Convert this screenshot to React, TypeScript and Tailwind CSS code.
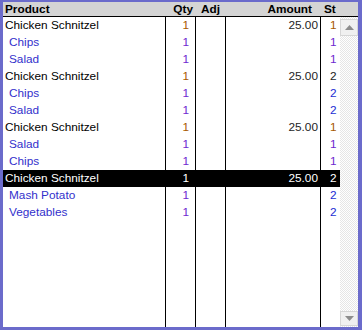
const rows = [
  { product: "Chicken Schnitzel", main: true, amount: "25.00", st: "1" },
  { product: "Chips", st: "1" },
  { product: "Salad", st: "1" },
  { product: "Chicken Schnitzel", main: true, amount: "25.00", st: "2" },
  { product: "Chips", st: "2" },
  { product: "Salad", st: "2" },
  { product: "Chicken Schnitzel", main: true, amount: "25.00", st: "1" },
  { product: "Salad", st: "1" },
  { product: "Chips", st: "1" },
  { product: "Chicken Schnitzel", main: true, amount: "25.00", st: "2", selected: true },
  { product: "Mash Potato", st: "2" },
  { product: "Vegetables", st: "2" },
];

function stColor(main?: boolean, st?: string) {
  if (main) return st === "1" ? "text-[#a85800]" : "text-[#1e1e1e]";
  return st === "1" ? "text-[#6e28d0]" : "text-[#1e2ed4]";
}

export default function App() {
  return (
    <div
      className="w-[362px] h-[330px] flex flex-col border-l-[3px] border-t-[2px] border-r-[4px] border-b-[3px] border-[#6b6bcb] bg-white text-[11.8px]"
      style={{ fontFamily: "'Liberation Sans', Arial, sans-serif" }}
    >
      {/* header */}
      <div className="flex h-[15px] shrink-0 bg-[#d4d4d4] border-b border-black font-bold text-black leading-[14px]">
        <div className="w-[163px] pl-[2px]">Product</div>
        <div className="w-[30px] text-right pr-[3px]">Qty</div>
        <div className="w-[30px] pl-[5px]">Adj</div>
        <div className="w-[95px] text-right pr-[9px]">Amount</div>
        <div className="w-[19px] pl-[3px]">St</div>
      </div>

      <div className="flex flex-1 min-h-0">
        {/* grid body */}
        <div className="w-[337px] flex flex-col">
          {rows.map((r, i) => (
            <div
              key={i}
              className={`flex h-[17px] leading-[17px] ${r.selected ? "bg-black text-white" : ""}`}
            >
              <div
                className={`w-[163px] border-r border-black truncate ${r.main ? "pl-[2px]" : "pl-[6px]"} ${
                  r.selected ? "" : r.main ? "text-black" : "text-[#3230cc]"
                }`}
              >
                {r.product}
              </div>
              <div
                className={`w-[30px] border-r border-black text-right pr-[6px] ${
                  r.selected ? "" : r.main ? "text-[#a85800]" : "text-[#6e28d0]"
                }`}
              >
                1
              </div>
              <div className="w-[30px] border-r border-black" />
              <div className={`w-[95px] border-r border-black text-right pr-[2px] ${r.selected ? "" : "text-[#1e1e1e]"}`}>
                {r.amount}
              </div>
              <div className={`w-[19px] pl-[9px] ${r.selected ? "" : stColor(r.main, r.st)}`}>{r.st}</div>
            </div>
          ))}
          <div className="flex flex-1">
            <div className="w-[163px] border-r border-black" />
            <div className="w-[30px] border-r border-black" />
            <div className="w-[30px] border-r border-black" />
            <div className="w-[95px] border-r border-black" />
            <div className="w-[19px]" />
          </div>
        </div>

        {/* scrollbar */}
        <div className="w-[18px] flex flex-col bg-[repeating-conic-gradient(#e6e6e6_0_25%,#ffffff_0_50%)] bg-[length:2px_2px]">
          <div className="h-[17px] mt-[2px] bg-[#f0f0f0] border border-[#d6d6d6] flex items-center justify-center">
            <svg width="9" height="5" viewBox="0 0 9 5">
              <path d="M4.5 0 L9 5 L0 5 Z" fill="#8c8c8c" />
            </svg>
          </div>
          <div className="flex-1" />
          <div className="h-[15px] mb-[1px] bg-[#f0f0f0] border border-[#d6d6d6] flex items-center justify-center">
            <svg width="9" height="5" viewBox="0 0 9 5">
              <path d="M0 0 L9 0 L4.5 5 Z" fill="#8c8c8c" />
            </svg>
          </div>
        </div>
      </div>
    </div>
  );
}
